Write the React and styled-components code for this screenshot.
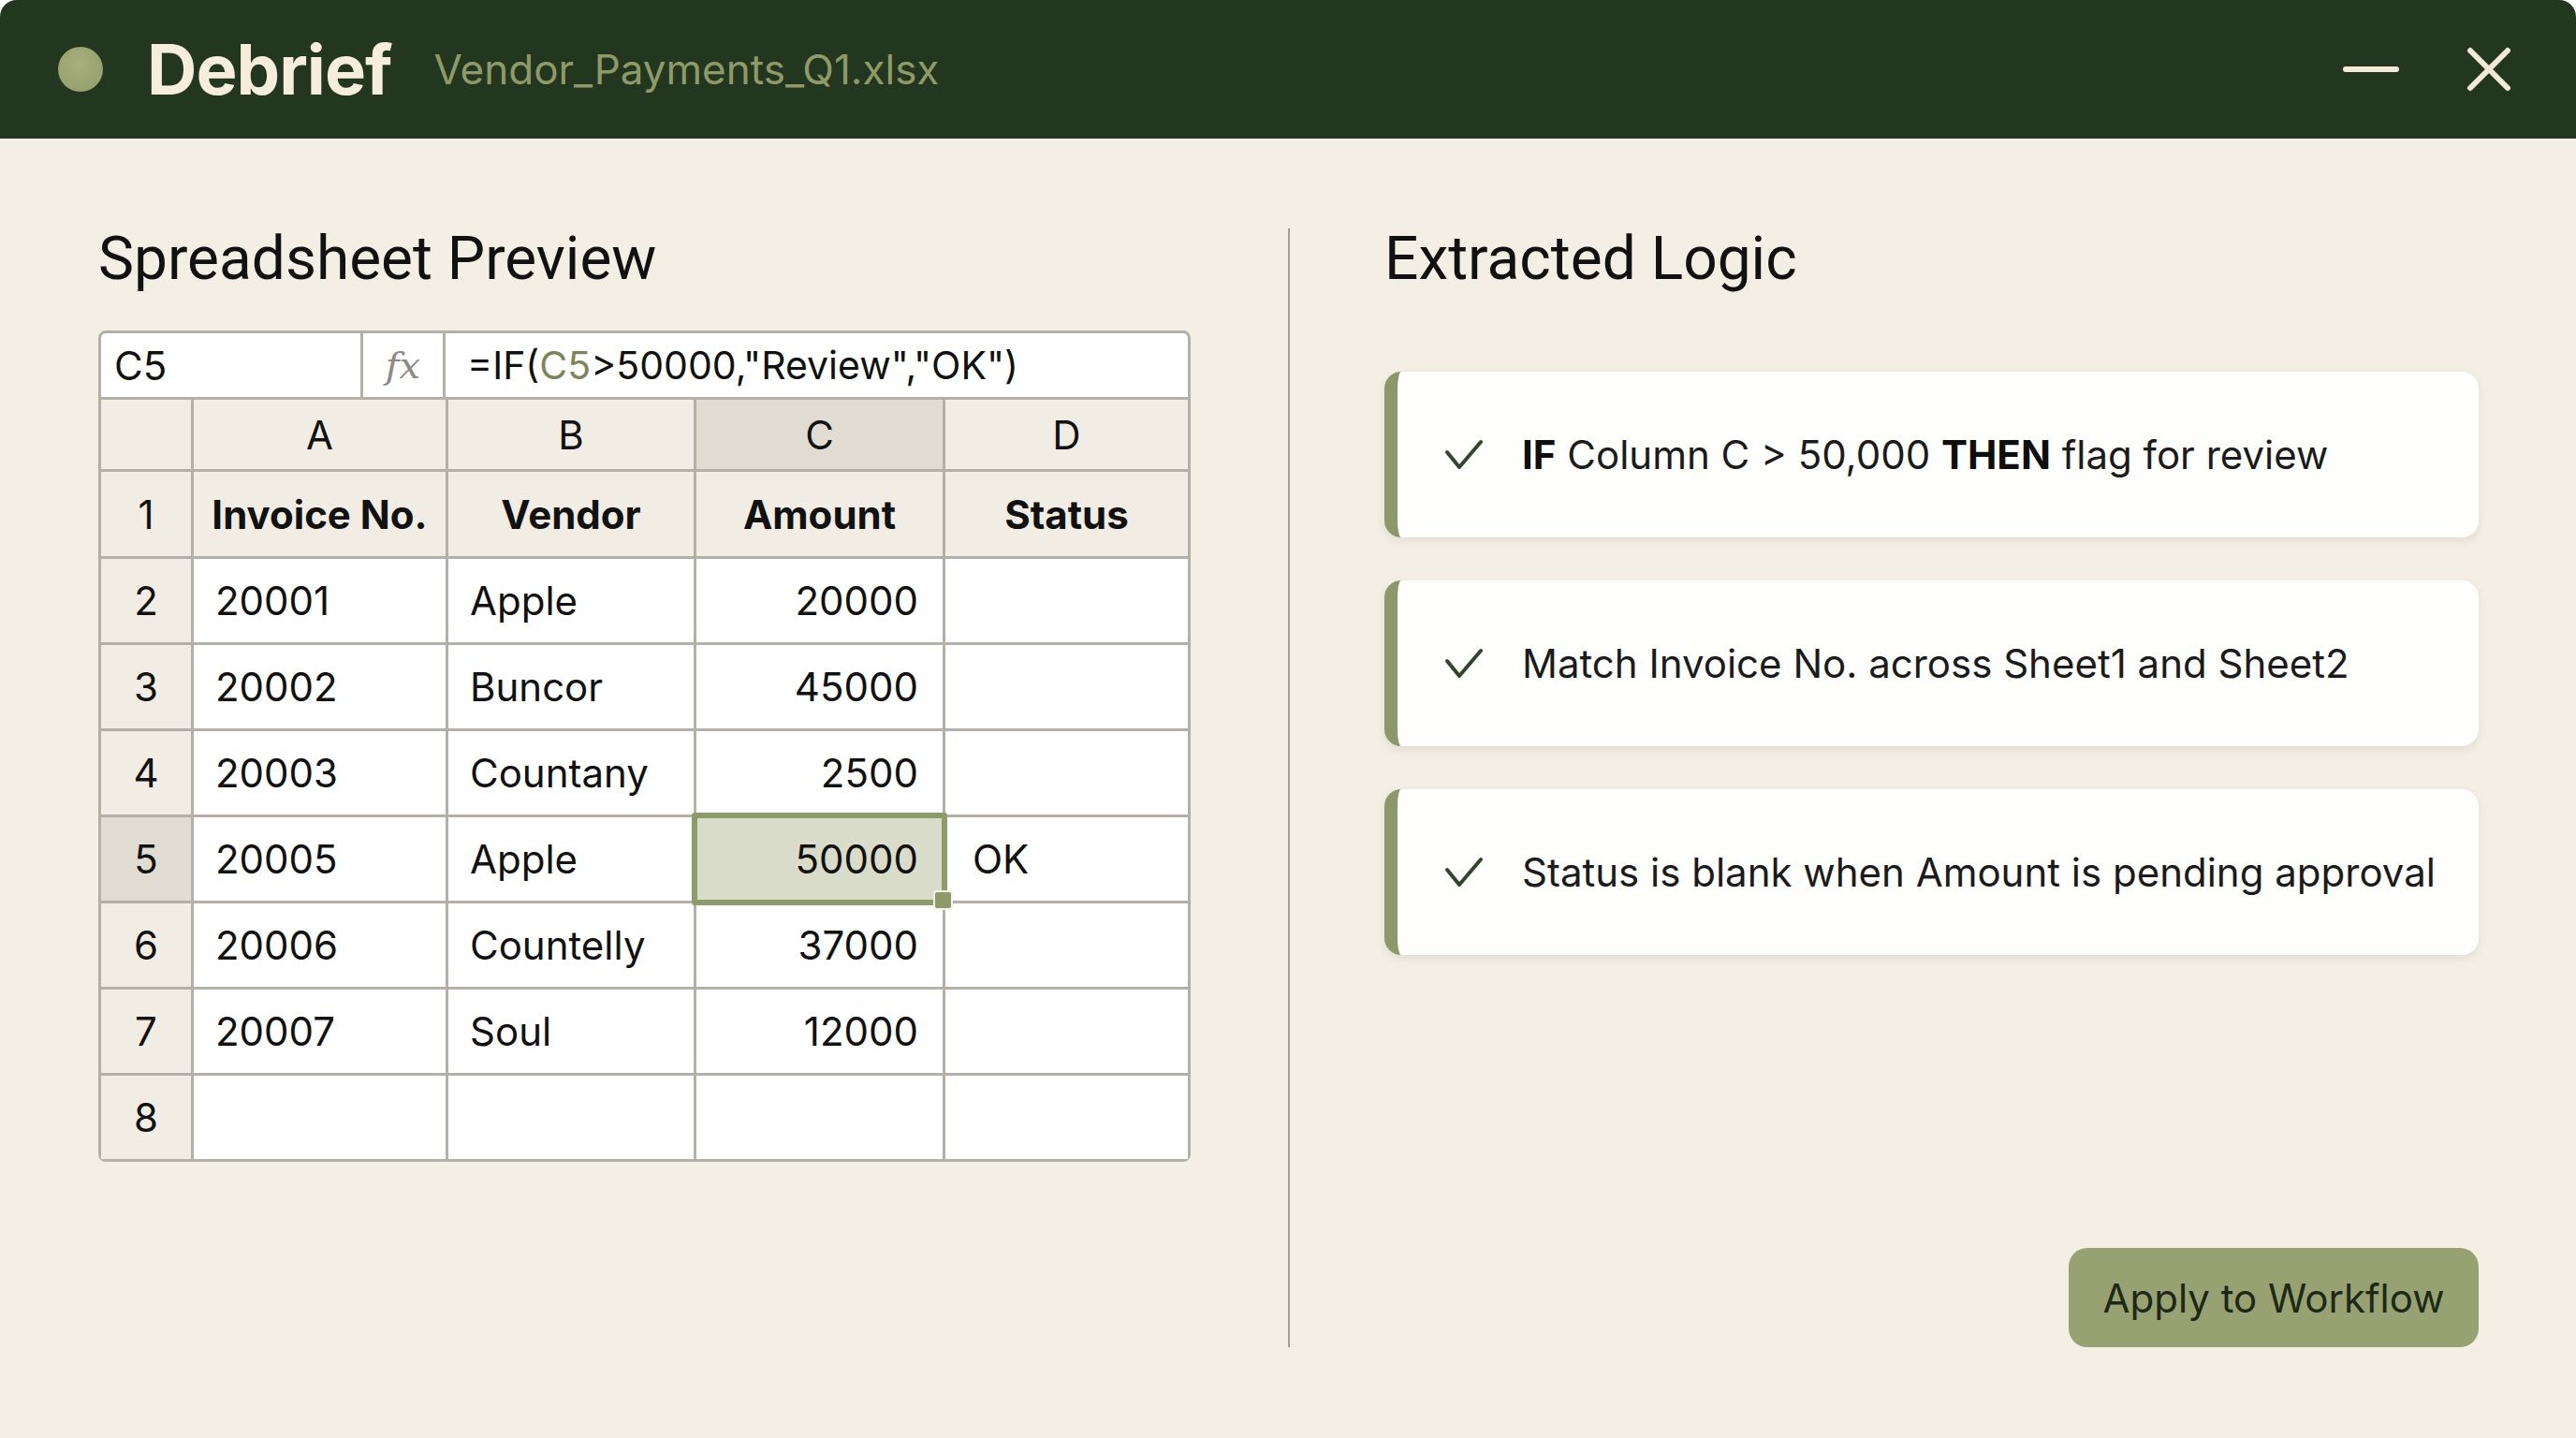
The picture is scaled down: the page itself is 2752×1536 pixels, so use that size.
import React from 'react';
import styled, { createGlobalStyle } from 'styled-components';

const GlobalStyle = createGlobalStyle`
  html, body {
    margin: 0;
    padding: 0;
    background: #ffffff;
  }
  * {
    box-sizing: border-box;
  }
  body {
    font-family: Inter, "Noto Sans", "Liberation Sans", sans-serif;
  }
`;

const Window = styled.div`
  width: 2752px;
  height: 1536px;
  background: #f4efe5;
  border-radius: 18px 18px 0 0;
  overflow: hidden;
  display: flex;
  flex-direction: column;
`;

const TitleBar = styled.header`
  height: 148px;
  flex-shrink: 0;
  background: #233620;
  display: flex;
  align-items: center;
  padding: 0 69px 0 62px;
`;

const Dot = styled.span`
  width: 48px;
  height: 48px;
  border-radius: 50%;
  background: radial-gradient(circle at 45% 40%, #a8b07c, #919c68);
  margin-right: 47px;
`;

const Brand = styled.span`
  font-size: 74px;
  font-weight: 700;
  color: #f6eddc;
  letter-spacing: -1px;
  line-height: 1;
`;

const FileName = styled.span`
  margin-left: 45px;
  font-size: 44px;
  color: #8f9b67;
  line-height: 1;
`;

const Controls = styled.div`
  margin-left: auto;
  display: flex;
  align-items: center;
  gap: 72px;
`;

const Main = styled.main`
  flex: 1;
  display: flex;
  padding: 96px 104px 97px 105px;
`;

const LeftPane = styled.section`
  width: 1167px;
  display: flex;
  flex-direction: column;
`;

const Divider = styled.div`
  width: 2px;
  background: #a29e95;
  margin: 0 101px 0 104px;
`;

const RightPane = styled.section`
  flex: 1;
  display: flex;
  flex-direction: column;
`;

const PaneTitle = styled.h2`
  margin: 0;
  font-family: Roboto, "Liberation Sans", sans-serif;
  font-size: 64px;
  font-weight: 400;
  line-height: 66px;
  color: #111;
`;

const Sheet = styled.div`
  margin-top: 43px;
  border: 3px solid #b4b0a7;
  border-radius: 8px;
  background: #fff;
  color: #111;
`;

const FormulaBar = styled.div`
  display: flex;
  height: 71px;
  border-bottom: 3px solid #b4b0a7;
  font-size: 42px;
`;

const NameBox = styled.div`
  width: 280px;
  border-right: 3px solid #b4b0a7;
  display: flex;
  align-items: center;
  padding-left: 14px;
`;

const FxBox = styled.div`
  width: 88px;
  border-right: 3px solid #b4b0a7;
  display: flex;
  align-items: center;
  justify-content: center;
  font-family: "DejaVu Serif", "Liberation Serif", serif;
  font-style: italic;
  color: #8b8a85;
  font-size: 40px;
`;

const Formula = styled.div`
  flex: 1;
  display: flex;
  align-items: center;
  padding-left: 23px;
  font-size: 41px;
`;

const Ref = styled.span`
  color: #7b8659;
`;

const Grid = styled.div`
  display: grid;
  grid-template-columns: 99px 272px 265px 266px 1fr;
`;

const Cell = styled.div`
  position: relative;
  height: ${p => p.$h}px;
  display: flex;
  align-items: center;
  justify-content: ${p => (p.$align === 'right' ? 'flex-end' : p.$align === 'center' ? 'center' : 'flex-start')};
  padding: 0 ${p => (p.$align === 'right' ? 26 : 0)}px 0 ${p => (p.$align === 'left' ? p.$pad || 23 : 0)}px;
  border-right: ${p => (p.$last ? 'none' : '3px solid #b4b0a7')};
  border-bottom: ${p => (p.$bottom ? 'none' : '3px solid #b4b0a7')};
  background: ${p => p.$bg || '#ffffff'};
  font-size: 42px;
  font-weight: ${p => (p.$bold ? 700 : 400)};
`;

const Selection = styled.span`
  position: absolute;
  top: -5px;
  left: -5px;
  right: -5px;
  bottom: -5px;
  border: 6px solid #8e9a69;
  border-radius: 3px;
  pointer-events: none;
  z-index: 2;
`;

const Handle = styled.span`
  position: absolute;
  right: -11px;
  bottom: -10px;
  width: 21px;
  height: 21px;
  border-radius: 4px;
  background: #8e9a69;
  border: 2px solid #f4f2ea;
  z-index: 3;
`;

const Cards = styled.div`
  margin-top: 87px;
  display: flex;
  flex-direction: column;
  gap: 46px;
`;

const Card = styled.div`
  height: 177px;
  background: #fefefd;
  border-radius: 18px;
  border-left: 14px solid #8d9868;
  box-shadow: 0 4px 10px rgba(80, 70, 50, 0.1);
  display: flex;
  align-items: center;
  padding-left: 51px;
  gap: 42px;
  font-size: 42px;
  color: #1b1b1b;
`;

const CardText = styled.span`
  strong {
    font-weight: 700;
    color: #0e0e0e;
  }
`;

const ApplyButton = styled.button`
  margin-top: auto;
  align-self: flex-end;
  width: 438px;
  height: 106px;
  border: none;
  border-radius: 20px;
  background: #98a172;
  color: #1c2917;
  font-family: inherit;
  font-size: 42px;
  cursor: pointer;
`;

const Check = () => (
  <svg width="40" height="34" viewBox="0 0 40 34" fill="none">
    <polyline points="2,14 15,30 38,3" stroke="#33452e" strokeWidth="4" strokeLinecap="round" strokeLinejoin="round" />
  </svg>
);

const columns = ['A', 'B', 'C', 'D'];
const rows = [
  ['20001', 'Apple', '20000', ''],
  ['20002', 'Buncor', '45000', ''],
  ['20003', 'Countany', '2500', ''],
  ['20005', 'Apple', '50000', 'OK'],
  ['20006', 'Countelly', '37000', ''],
  ['20007', 'Soul', '12000', ''],
  ['', '', '', ''],
];

const HEAD_BG = '#f2ede4';
const HEAD_ACTIVE = '#e1dcd2';

const rules = [
  <><strong>IF</strong> Column C &gt; 50,000 <strong>THEN</strong> flag for review</>,
  <>Match Invoice No. across Sheet1 and Sheet2</>,
  <>Status is blank when Amount is pending approval</>,
];

export default function App() {
  return (
    <>
      <GlobalStyle />
      <Window>
        <TitleBar>
          <Dot />
          <Brand>Debrief</Brand>
          <FileName>Vendor_Payments_Q1.xlsx</FileName>
          <Controls>
            <svg width="60" height="48" viewBox="0 0 60 48">
              <line x1="3" y1="24" x2="57" y2="24" stroke="#f2e9d6" strokeWidth="6" strokeLinecap="round" />
            </svg>
            <svg width="48" height="48" viewBox="0 0 48 48">
              <line x1="4" y1="4" x2="44" y2="44" stroke="#f2e9d6" strokeWidth="6" strokeLinecap="round" />
              <line x1="44" y1="4" x2="4" y2="44" stroke="#f2e9d6" strokeWidth="6" strokeLinecap="round" />
            </svg>
          </Controls>
        </TitleBar>

        <Main>
          <LeftPane>
            <PaneTitle>Spreadsheet Preview</PaneTitle>
            <Sheet>
              <FormulaBar>
                <NameBox>C5</NameBox>
                <FxBox>fx</FxBox>
                <Formula>=IF(<Ref>C5</Ref>&gt;50000,"Review","OK")</Formula>
              </FormulaBar>
              <Grid>
                <Cell $h={77} $align="center" $bg={HEAD_BG} />
                {columns.map((c, i) => (
                  <Cell key={c} $h={77} $align="center" $bg={c === 'C' ? HEAD_ACTIVE : HEAD_BG} $last={i === 3}>
                    {c}
                  </Cell>
                ))}

                <Cell $h={93} $align="center" $bg={HEAD_BG}>1</Cell>
                {['Invoice No.', 'Vendor', 'Amount', 'Status'].map((t, i) => (
                  <Cell key={t} $h={93} $align="center" $bg={HEAD_BG} $bold $last={i === 3}>
                    {t}
                  </Cell>
                ))}

                {rows.map((r, ri) => {
                  const n = ri + 2;
                  const active = n === 5;
                  const bottom = ri === rows.length - 1;
                  const h = bottom ? 89 : 92;
                  return (
                    <React.Fragment key={n}>
                      <Cell $h={h} $align="center" $bg={active ? HEAD_ACTIVE : HEAD_BG} $bottom={bottom}>
                        {n}
                      </Cell>
                      <Cell $h={h} $align="left" $bottom={bottom}>{r[0]}</Cell>
                      <Cell $h={h} $align="left" $bottom={bottom}>{r[1]}</Cell>
                      <Cell $h={h} $align="right" $bottom={bottom} $bg={active ? '#d9dcc8' : undefined}>
                        {r[2]}
                        {active && (
                          <>
                            <Selection />
                            <Handle />
                          </>
                        )}
                      </Cell>
                      <Cell $h={h} $align="left" $pad={29} $bottom={bottom} $last>{r[3]}</Cell>
                    </React.Fragment>
                  );
                })}
              </Grid>
            </Sheet>
          </LeftPane>

          <Divider />

          <RightPane>
            <PaneTitle>Extracted Logic</PaneTitle>
            <Cards>
              {rules.map((rule, i) => (
                <Card key={i}>
                  <Check />
                  <CardText>{rule}</CardText>
                </Card>
              ))}
            </Cards>
            <ApplyButton>Apply to Workflow</ApplyButton>
          </RightPane>
        </Main>
      </Window>
    </>
  );
}
